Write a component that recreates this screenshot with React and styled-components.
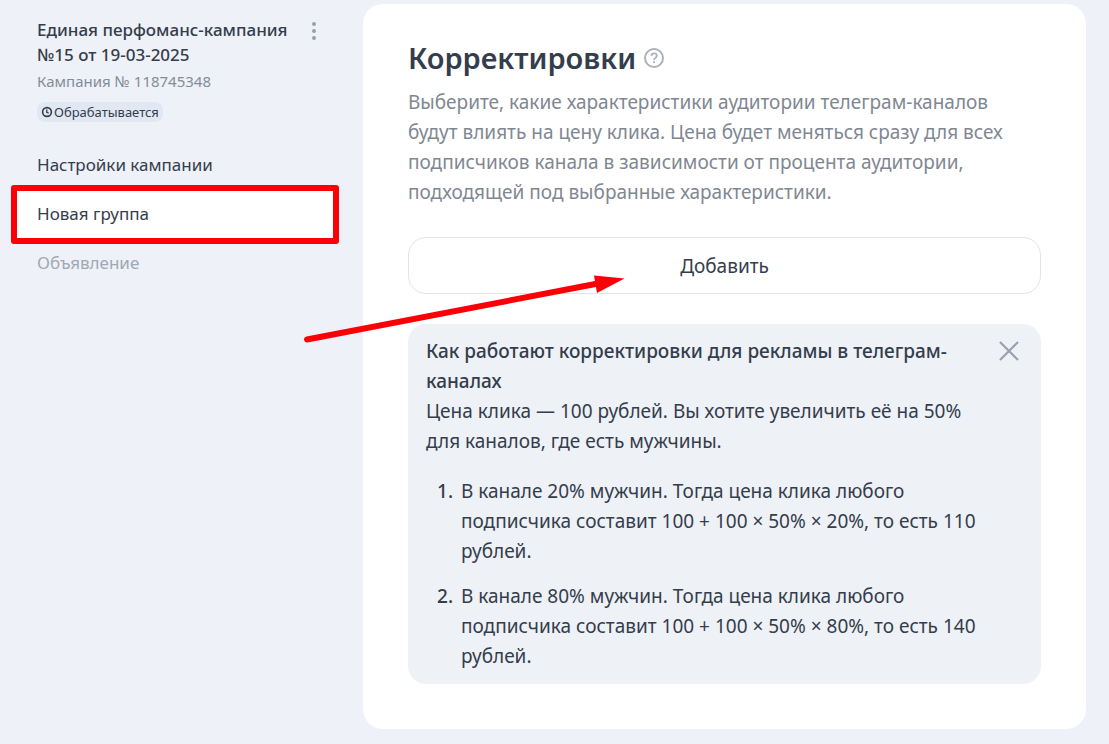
import React from "react";
import styled, { createGlobalStyle } from "styled-components";

const GlobalStyle = createGlobalStyle`
  *, *::before, *::after { box-sizing: border-box; }
  body {
    margin: 0;
    background: #eef1f7;
    color: #343d4c;
    font-family: "Noto Sans", "Open Sans", sans-serif;
    font-size: 19px;
    line-height: 30px;
  }
  h1, h2, p, ol, ul { margin: 0; padding: 0; }
  button { font: inherit; color: inherit; cursor: pointer; }
`;

const Page = styled.div`
  position: relative;
  display: flex;
  align-items: flex-start;
  min-height: 100vh;
  padding: 4px 23px 15px 0;
`;

const Sidebar = styled.aside`
  flex: 0 0 363px;
  padding-top: 13px;
`;

const CampaignHeader = styled.header`
  display: flex;
  align-items: flex-start;
  justify-content: space-between;
  padding: 0 40px 0 37px;
`;

const CampaignName = styled.h2`
  font-size: 17px;
  line-height: 25px;
  font-weight: 500;
`;

const CampaignNumber = styled.p`
  margin-top: 2px;
  font-size: 15px;
  line-height: 25px;
  color: #858d99;
`;

const Status = styled.div`
  display: flex;
  align-items: center;
  gap: 1px;
  width: fit-content;
  height: 20px;
  margin-top: 8px;
  padding: 0 4px;
  border-radius: 8px;
  background: #e2e8f3;
  font-size: 13px;
  line-height: 20px;
`;

const IconButton = styled.button`
  display: flex;
  flex: none;
  padding: 0;
  border: 0;
  background: none;
  color: ${({ $color }) => $color};
`;

const MenuButton = styled(IconButton)`
  margin-top: 4px;
`;

const NavList = styled.ul`
  margin-top: 18px;
  list-style: none;
`;

const NavItem = styled.li`
  position: relative;
  margin: 0 24px 0 11px;
  background: ${({ $active }) => ($active ? "#fff" : "none")};
`;

const NavLink = styled.a`
  display: block;
  padding: 0 26px;
  font-size: 17px;
  line-height: 49px;
  text-decoration: none;
  color: ${({ $muted }) => ($muted ? "#a0a8b6" : "inherit")};
`;

const Highlight = styled.span`
  position: absolute;
  inset: -4px 0 -6px;
  border: 6px solid #fb0007;
  border-radius: 3px;
  pointer-events: none;
`;

const Card = styled.main`
  flex: 1;
  min-width: 0;
  padding: 33px 45px 45px;
  border-radius: 20px;
  background: #fff;
`;

const TitleRow = styled.div`
  display: flex;
  align-items: center;
  gap: 8px;
`;

const Title = styled.h1`
  font-size: 29px;
  line-height: 42px;
  font-weight: 600;
`;

const Description = styled.p`
  margin-top: 8px;
  color: #7f8792;
`;

const AddButton = styled.button`
  display: block;
  width: 100%;
  height: 57px;
  margin: 30px 0;
  border: 1px solid #e2e4e8;
  border-radius: 18px;
  background: #fff;
`;

const Hint = styled.section`
  display: flex;
  align-items: flex-start;
  gap: 16px;
  padding: 12px 21px 13px 18px;
  border-radius: 18px;
  background: #eef1f6;
`;

const HintBody = styled.div`
  flex: 1;
  min-width: 0;
`;

const HintTitle = styled.h2`
  font-size: inherit;
  font-weight: 500;
`;

const Steps = styled.ol`
  display: grid;
  gap: 15px;
  margin-top: 20px;
  padding-left: 32px;
`;

const Step = styled.li`
  padding-left: 3px;
  &::marker { font-weight: 500; }
`;

const CloseButton = styled(IconButton)`
  margin-top: 4px;
`;

const Arrow = styled.svg`
  position: absolute;
  left: 300px;
  top: 268px;
  pointer-events: none;
`;

export default function App() {
  return (
    <>
      <GlobalStyle />
      <Page>
        <Sidebar>
          <CampaignHeader>
            <div>
              <CampaignName>
                Единая перфоманс-кампания
                <br />
                №15 от 19-03-2025
              </CampaignName>
              <CampaignNumber>Кампания № 118745348</CampaignNumber>
              <Status>
                <svg width="12" height="12" viewBox="0 0 12 12" fill="none" stroke="currentColor" strokeWidth="1.6" aria-hidden="true">
                  <circle cx="6" cy="6" r="4.4" />
                  <path d="M5.8 3.4v2.9l1.9.8" strokeWidth="1.3" />
                </svg>
                Обрабатывается
              </Status>
            </div>
            <MenuButton type="button" $color="#9a9fae" aria-label="Меню кампании">
              <svg width="18" height="20" viewBox="0 0 18 20" fill="currentColor" aria-hidden="true">
                <circle cx="9" cy="3" r="2" />
                <circle cx="9" cy="10" r="2" />
                <circle cx="9" cy="17" r="2" />
              </svg>
            </MenuButton>
          </CampaignHeader>
          <nav>
            <NavList>
              <NavItem>
                <NavLink href="#settings">Настройки кампании</NavLink>
              </NavItem>
              <NavItem $active>
                <NavLink href="#group" aria-current="page">Новая группа</NavLink>
                <Highlight />
              </NavItem>
              <NavItem>
                <NavLink href="#ad" $muted>Объявление</NavLink>
              </NavItem>
            </NavList>
          </nav>
        </Sidebar>

        <Card>
          <TitleRow>
            <Title>Корректировки</Title>
            <IconButton type="button" $color="#adb1ba" aria-label="Справка">
              <svg width="20" height="20" viewBox="0 0 20 20" fill="none" stroke="currentColor" strokeWidth="2" aria-hidden="true">
                <circle cx="10" cy="10" r="9" />
                <path d="M7.3 7.9c.1-1.6 1.2-2.5 2.800-2.500 1.600 0 2.700.9 2.700 2.300 0 1.100-.5 1.700-1.500 2.300-.9.600-1.200 1-1.200 1.800v.3" strokeWidth="1.7" />
                <circle cx="10" cy="14.2" r="1.1" fill="currentColor" stroke="none" />
              </svg>
            </IconButton>
          </TitleRow>
          <Description>
            Выберите, какие характеристики аудитории телеграм-каналов будут влиять на цену клика. Цена
            будет меняться сразу для всех подписчиков канала в зависимости от процента аудитории,
            подходящей под выбранные характеристики.
          </Description>
          <AddButton type="button">Добавить</AddButton>
          <Hint>
            <HintBody>
              <HintTitle>Как работают корректировки для рекламы в телеграм-каналах</HintTitle>
              <p>Цена клика — 100 рублей. Вы хотите увеличить её на 50% для каналов, где есть мужчины.</p>
              <Steps>
                <Step>
                  В канале 20% мужчин. Тогда цена клика любого подписчика составит 100 + 100 × 50% × 20%,
                  то есть 110 рублей.
                </Step>
                <Step>
                  В канале 80% мужчин. Тогда цена клика любого подписчика составит 100 + 100 × 50% × 80%,
                  то есть 140 рублей.
                </Step>
              </Steps>
            </HintBody>
            <CloseButton type="button" $color="#9c9fb2" aria-label="Закрыть">
              <svg width="22" height="22" viewBox="0 0 22 22" fill="none" stroke="currentColor" strokeWidth="2.2" aria-hidden="true">
                <path d="M2 2l18 18M20 2L2 20" />
              </svg>
            </CloseButton>
          </Hint>
        </Card>

        <Arrow width="330" height="80" viewBox="0 0 330 80" aria-hidden="true">
          <path d="M7 71.5L298 15.5" stroke="#fb0007" strokeWidth="6" strokeLinecap="round" />
          <path d="M324.5 10.5L294 7.5L297 25Z" fill="#fb0007" />
        </Arrow>
      </Page>
    </>
  );
}
